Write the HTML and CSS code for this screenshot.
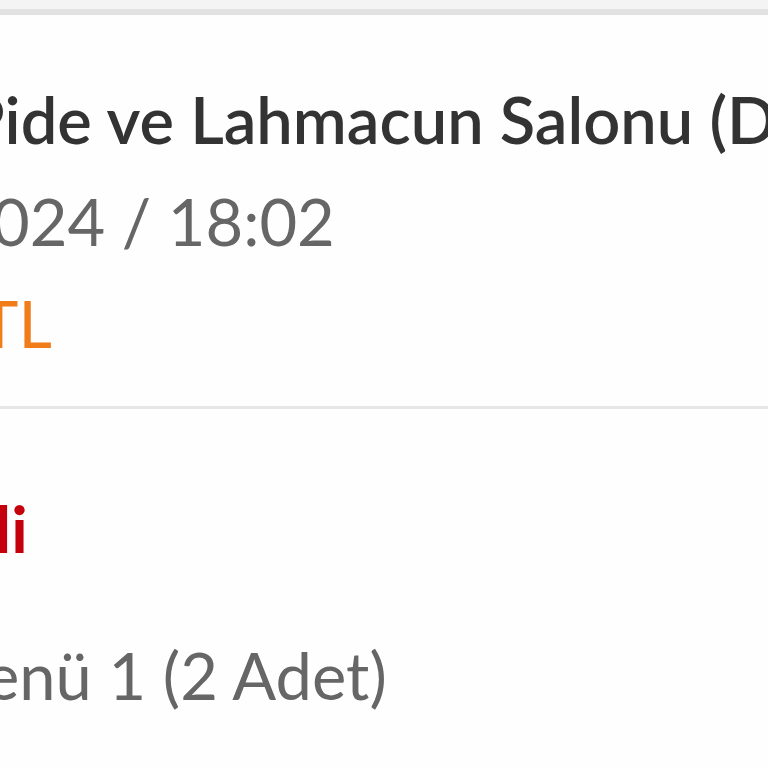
FILE: index.html
```html
<!DOCTYPE html>
<html lang="tr">
<head>
<meta charset="utf-8">
<link rel="stylesheet" href="styles.css">
</head>
<body>
<div class="topbar"></div>
<div class="card">
  <section class="info">
    <div class="line title">Pide ve Lahmacun Salonu (Demo)</div>
    <div class="line date">024 / 18:02</div>
    <div class="line price">TL</div>
  </section>
  <section class="status">
    <div class="line state">li</div>
    <div class="line menu">enü 1 (2 Adet)</div>
  </section>
</div>
</body>
</html>
```
FILE: styles.css
```css
html, body { margin: 0; padding: 0; background: #fefefe; }
body { width: 768px; height: 768px; overflow: hidden; font-family: Lato, "Open Sans", sans-serif; }
.topbar { height: 9px; background: #f4f4f4; border-bottom: 6px solid #e2e2e2; }
.card { background: #fefefe; overflow: hidden; }
.info { padding-top: 53px; padding-bottom: 32px; border-bottom: 3px solid #e6e6e6; }
.line { font-size: 65px; line-height: 102px; white-space: nowrap; }
.title { color: #333; font-weight: 600; margin-left: -35px; }
.date { color: #666; margin-left: -8px; }
.price { color: #f07d1a; margin-left: -20px; }
.status { padding-top: 68px; }
.state { color: #c4000c; font-weight: 700; margin-left: -5px; }
.menu { color: #666; margin-top: 45px; margin-left: -15px; }
```
